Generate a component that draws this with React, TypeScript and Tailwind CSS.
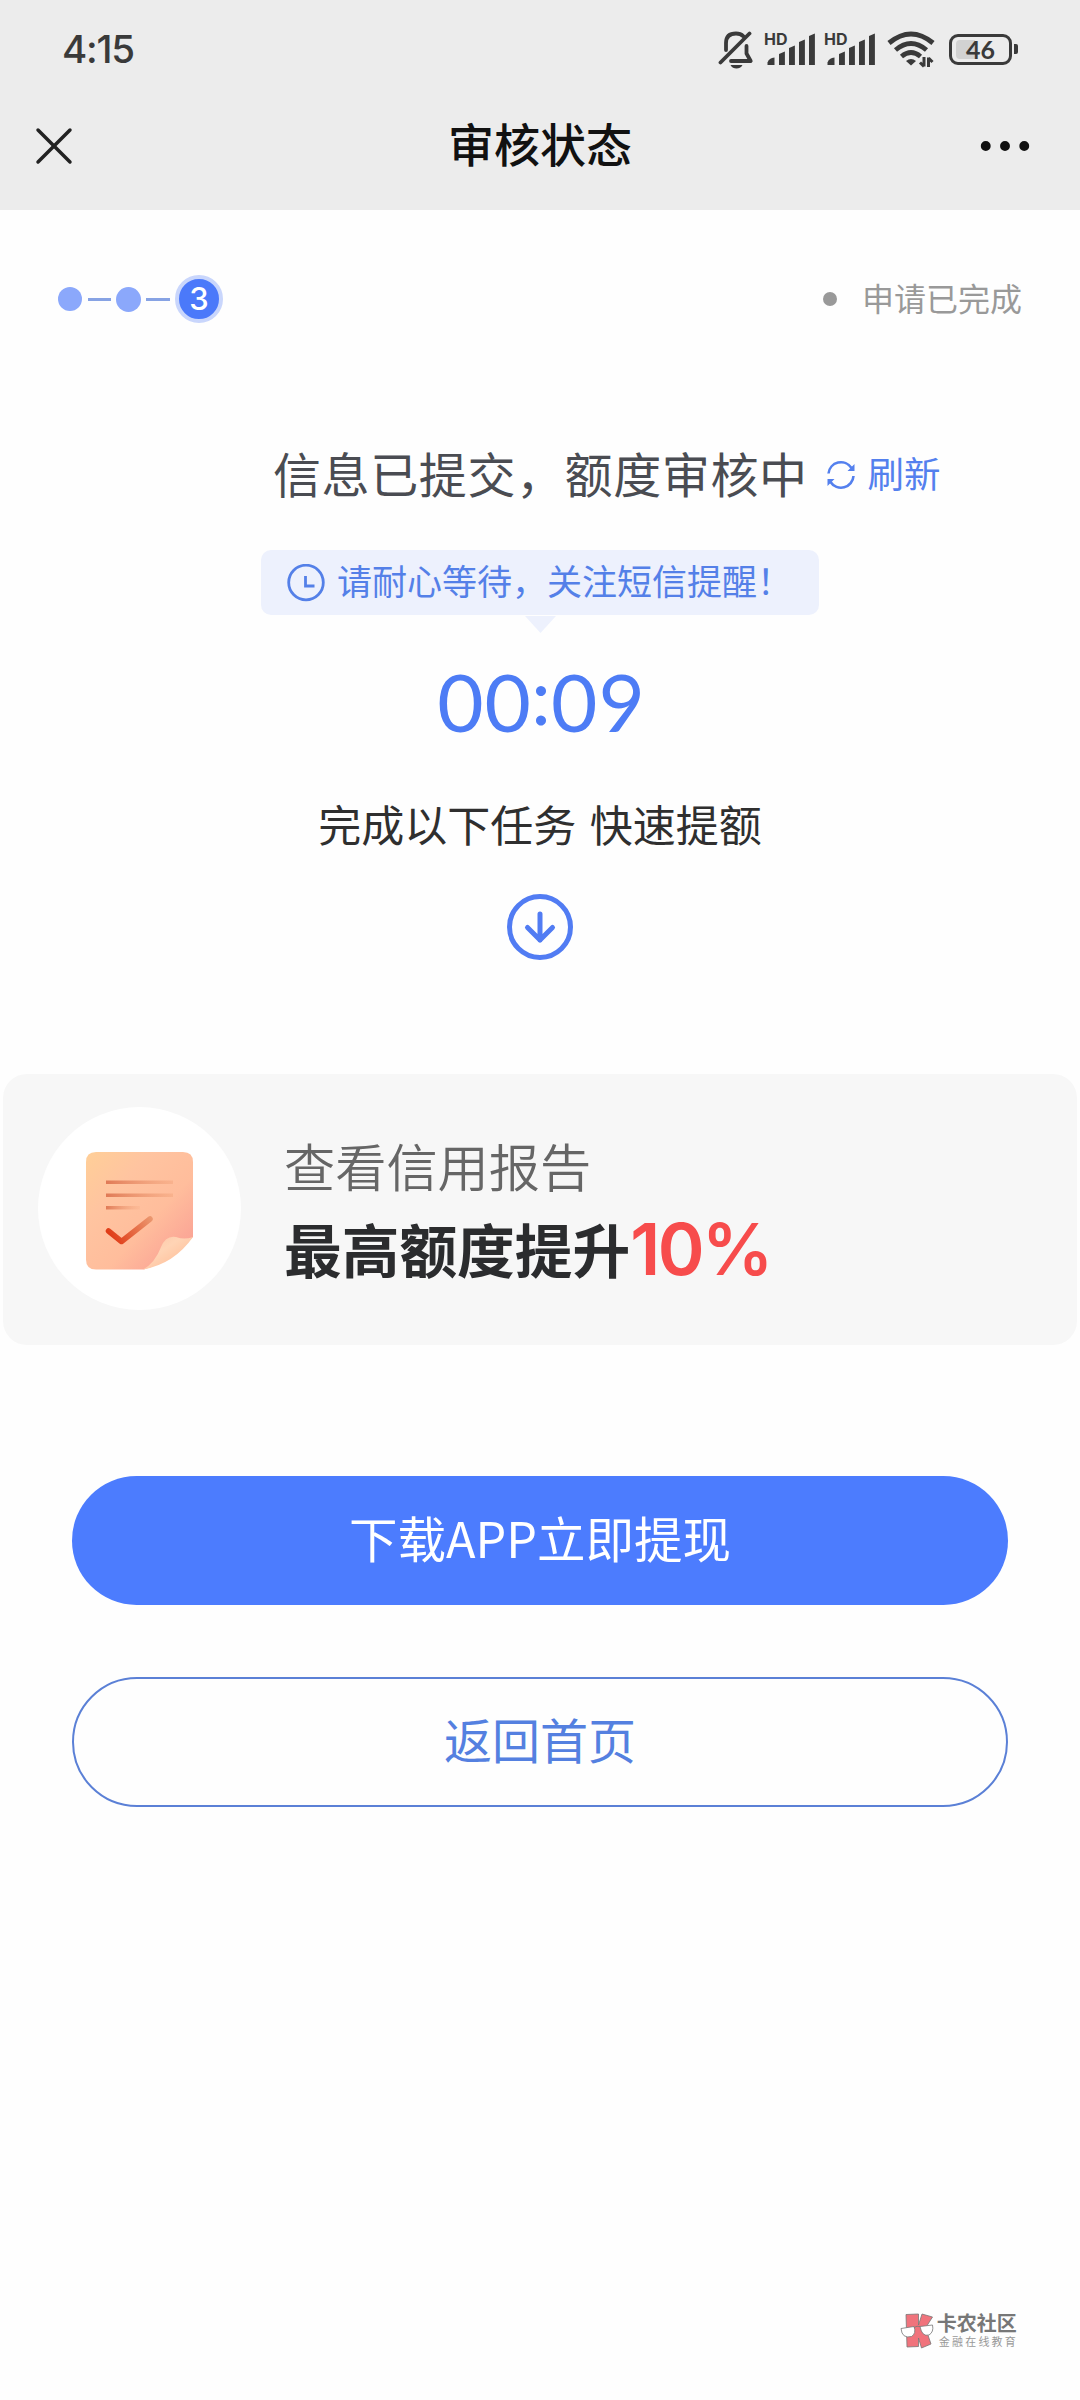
import { X, Ellipsis } from 'lucide-react'

const signalBars = [
  { x: 14, y: 19 },
  { x: 24, y: 13 },
  { x: 34, y: 7 },
  { x: 44, y: 1 },
]

function MutedBell() {
  return (
    <svg className="h-[40px] w-[36px]" viewBox="0 0 36 40" fill="none" stroke="#3a3a3a" strokeWidth="3.800" strokeLinecap="round">
      <path d="M8 21V14C8 7.500 12 4.500 18 4.500c3 0 5.500 1 7.500 2.800" />
      <path d="M2.500 33.500 31.500 4.500" />
      <path d="M28.500 17v7.500l4.200 7.500H13" strokeLinejoin="round" />
      <path d="M12.500 36H24.500c-1.500 2.700-3.500 3.500-6 3.500s-4.600-.8-6-3.500z" fill="#3a3a3a" stroke="none" />
    </svg>
  )
}

function Signal() {
  return (
    <div className="relative h-[34px] w-[52px]">
      <span className="absolute -top-[3px] -left-px font-[Inter] text-[16px] leading-[20px] font-bold text-[#3a3a3a]">HD</span>
      <svg className="h-[34px] w-[52px]" viewBox="0 0 52 34" fill="#3a3a3a">
        <path d="M2.500 33V30.500Q4 26 9.500 25.500V33z" />
        {signalBars.map((bar) => (
          <path key={bar.x} d={`M${bar.x} ${bar.y + 3}l5.900-2.500V33h-5.900z`} />
        ))}
      </svg>
    </div>
  )
}

function Wifi() {
  return (
    <svg className="h-[38px] w-[48px]" viewBox="0 0 48 38" fill="none" stroke="#3a3a3a">
      <path d="M2 13Q24-5 46 13" strokeWidth="5" />
      <path d="M8.500 20Q24 7 39.500 20" strokeWidth="4.800" />
      <path d="M14.500 26.500Q24 18.500 33.500 26.500" strokeWidth="4.800" />
      <path d="M19 31q5-4 10 0l-5 4.500z" fill="#3a3a3a" stroke="none" />
      <path d="M37 27v9.500M33 32.500l4 4M41.500 37V27.500M41.500 28l4 4" strokeWidth="3" />
    </svg>
  )
}

function Battery() {
  return (
    <div className="flex items-center gap-0.5">
      <div className="relative h-[31px] w-[63px] rounded-[9px] border-3 border-[#3a3a3a]">
        <div className="absolute top-[3px] left-[4px] h-[19px] w-[19px] rounded-l-[4px] bg-[#d2d2d2]" />
        <span className="absolute inset-0 flex items-center justify-center font-[Lato] text-[25px] leading-none font-bold text-[#3a3a3a]">46</span>
      </div>
      <div className="h-[10px] w-[4px] rounded-r-[2px] bg-[#3a3a3a]" />
    </div>
  )
}

function RefreshIcon() {
  return (
    <svg className="h-[30px] w-[30px]" viewBox="0 0 30 30" fill="none" stroke="#5480ee" strokeWidth="2.600">
      <path d="M2.500 13.500A12.500 12.500 0 0 1 25.500 8" />
      <path d="M27.500 16A12.500 12.500 0 0 1 4.500 22" />
      <path d="M28.500 4V11H21.500zM1.500 26V19H8.500z" fill="#5480ee" stroke="none" />
    </svg>
  )
}

function ReportIcon() {
  return (
    <svg className="h-[118px] w-[108px]" viewBox="0 0 108 118" fill="none">
      <defs>
        <linearGradient id="sheet" x1="0" y1="0" x2="1" y2="1">
          <stop offset="0" stopColor="#ffcf98" />
          <stop offset="0.3" stopColor="#ffc4a0" />
          <stop offset="0.6" stopColor="#ffbd9c" />
          <stop offset="0.85" stopColor="#fba696" />
          <stop offset="1" stopColor="#fdb498" />
        </linearGradient>
        <linearGradient id="fold" x1="0" y1="0" x2="1" y2="1">
          <stop offset="0" stopColor="#fcc3a4" />
          <stop offset="0.4" stopColor="#ffd4b5" />
          <stop offset="1" stopColor="#ffb58d" />
        </linearGradient>
        <linearGradient id="line" gradientUnits="userSpaceOnUse" x1="20" y1="0" x2="87" y2="0">
          <stop offset="0" stopColor="#e07a56" />
          <stop offset="1" stopColor="#f3a67e" stopOpacity="0.500" />
        </linearGradient>
        <linearGradient id="lineShort" gradientUnits="userSpaceOnUse" x1="20" y1="0" x2="54" y2="0">
          <stop offset="0" stopColor="#e07a56" />
          <stop offset="1" stopColor="#f3a67e" stopOpacity="0.200" />
        </linearGradient>
        <linearGradient id="check" gradientUnits="userSpaceOnUse" x1="28" y1="90" x2="66" y2="66">
          <stop offset="0" stopColor="#e03c17" />
          <stop offset="1" stopColor="#eb9870" />
        </linearGradient>
      </defs>
      <path d="M10 0H97Q107 0 107 10V85Q86 109 58 117.500H10Q0 117.500 0 107.500V10Q0 0 10 0z" fill="url(#sheet)" />
      <path d="M57 117.500Q69 111 75 95 80 83 90 85 98 88 107 85 88 112 57 117.500z" fill="url(#fold)" />
      <path d="M20 28.500h67v3.500h-67zM20 41.500h67V45h-67z" fill="url(#line)" />
      <path d="M20 54h34v3.500h-34z" fill="url(#lineShort)" />
      <path d="M22.500 79l13 10.500L64 67" stroke="url(#check)" strokeWidth="5.500" strokeLinejoin="round" strokeLinecap="round" />
    </svg>
  )
}

function CommunityLogo() {
  return (
    <svg className="h-[36px] w-[34px]" viewBox="0 0 34 36" stroke="#777" strokeWidth="0.800">
      <path d="M6 1.500 18.500 1v11L22 1l10.500 3-7 11 5.500 16-9.500 4L18.500 25v8.500L7 34z" fill="#f0737c" />
      <path d="M1 15.500 14 13.500q2.500 7-2.500 10Q2 26 1 15.500zM20 13.500 32.500 12q1.500 7-3.500 10-7 2-9-8.500z" fill="#fff" />
      <path d="M14 14.500q3-2 6-1" fill="none" />
    </svg>
  )
}

export default function App() {
  return (
    <div className="flex h-[2400px] w-[1080px] flex-col overflow-hidden bg-[#fefefe] font-['Noto_Sans_CJK_SC',sans-serif]">
      <header className="h-[210px] bg-[#ececec]">
        <div className="flex h-[98px] items-center justify-between px-[62px]">
          <span className="font-[Inter] text-[38.5px] leading-none font-medium tracking-[-1.2px] text-[#3a3a3a]">4:15</span>
          <div className="flex items-center">
            <MutedBell />
            <div className="w-[11px]" />
            <Signal />
            <div className="w-2" />
            <Signal />
            <div className="w-[10px]" />
            <Wifi />
            <div className="w-[14px]" />
            <Battery />
          </div>
        </div>
        <div className="grid h-[95px] grid-cols-3 items-center px-[22px]">
          <X className="h-[64px] w-[64px]" strokeWidth={1.3} color="#222" />
          <h1 className="pb-[7px] text-center text-[46px] leading-none font-medium whitespace-nowrap text-[#111]">审核状态</h1>
          <Ellipsis className="mr-[20px] ml-auto h-[66px] w-[66px]" strokeWidth={1.6} fill="#111" color="#111" />
        </div>
      </header>

      <div className="flex h-[178px] items-center justify-between px-[58px]">
        <div className="flex items-center">
          <span className="h-6 w-6 rounded-full bg-[#8ba8fb]" />
          <span className="mx-[5.5px] h-[3px] w-[23px] bg-[#87a3e4]" />
          <span className="h-[25px] w-[25px] rounded-full bg-[#8ba8fb]" />
          <span className="mx-[5px] h-[3px] w-6 bg-[#87a3e4]" />
          <span className="flex h-12 w-12 items-center justify-center rounded-full border-4 border-[#c9d6fc] bg-[#4b79fa] font-[Inter] text-[31px] font-medium text-white">3</span>
        </div>
        <div className="flex items-center text-[#999]">
          <span className="mr-[25px] h-[14px] w-[14px] rounded-full bg-[#999]" />
          <span className="pb-[5px] text-[32px] leading-none">申请已完成</span>
        </div>
      </div>

      <div className="mt-[57px] flex h-[60px] items-center pl-[273px]">
        <h2 className="pb-[6px] text-[48px] leading-none tracking-[0.6px] whitespace-nowrap text-[#4a4c52]">信息已提交，额度审核中</h2>
        <div className="ml-[18px] flex items-center gap-[12px] text-[#5480ee]">
          <RefreshIcon />
          <span className="pb-[4px] text-[36.5px] leading-none">刷新</span>
        </div>
      </div>

      <div className="mt-[45px] flex flex-col items-center">
        <div className="flex h-[65px] w-[558px] items-center rounded-[10px] bg-[#edf1fd] pl-[26px] text-[#5480e8]">
          <svg className="h-[38px] w-[38px]" viewBox="0 0 38 38" fill="none" stroke="currentColor" strokeWidth="2.800">
            <circle cx="19" cy="18.500" r="17.300" />
            <path d="M18.500 12v10h9" />
          </svg>
          <span className="ml-[12px] pb-[6px] text-[35px] leading-none whitespace-nowrap">请耐心等待，关注短信提醒！</span>
        </div>
        <svg className="mt-px h-[17px] w-[31px]" viewBox="0 0 31 17">
          <path d="M0 0h31L15.500 17z" fill="#edf1fd" />
        </svg>
        <div className="mt-[28px] flex h-[80px] items-center font-[Lato] text-[80px] leading-none tracking-[1px] text-[#4d7cf5]">
          <span>00</span>
          <span className="-mx-px pb-[15px]">:</span>
          <span className="-mr-[3px]">09</span>
        </div>
        <p className="mt-[61px] flex h-[43px] items-center text-[43px] leading-none [word-spacing:4px] whitespace-pre text-[#2f2f2f]">完成以下任务 快速提额</p>
        <svg className="mt-[49px] h-[66px] w-[66px]" viewBox="0 0 66 66" fill="none" stroke="#517cf3" strokeWidth="5" strokeLinecap="round" strokeLinejoin="round">
          <circle cx="33" cy="33" r="30.500" />
          <path d="M33 20v26M20.500 33.500 33 46l12.500-12.500" />
        </svg>
      </div>

      <div className="mx-[3px] mt-[114px] flex h-[271px] items-center rounded-[24px] bg-[#f7f7f7] pb-[3px] pl-[35px]">
        <div className="flex h-[203px] w-[203px] items-center justify-center rounded-full bg-white pt-[6px]">
          <ReportIcon />
        </div>
        <div className="ml-[43px] flex flex-col pt-[8px]">
          <span className="text-[51.2px] leading-[60px] font-[350] text-[#666]">查看信用报告</span>
          <div className="mt-[14px] flex h-[80px] items-center">
            <span className="text-[57.7px] leading-none font-bold text-[#2b2c2e]">最高额度提升</span>
            <span className="font-[Inter] text-[71px] leading-none font-semibold tracking-[-2.5px] text-[#f74c4c]">10%</span>
          </div>
        </div>
      </div>

      <div className="mt-[131px] flex flex-col gap-[72px] px-[72px]">
        <button className="h-[129px] rounded-full bg-[#4c7cfe] pb-[6px] text-[48.5px] leading-none text-white">下载APP立即提现</button>
        <button className="h-[130px] rounded-full border-2 border-[#5b80d6] pb-[8px] text-[48px] leading-none text-[#5480e0]">返回首页</button>
      </div>

      <div className="mt-auto mr-[62px] mb-[51px] flex items-center justify-end gap-[3px]">
        <CommunityLogo />
        <div className="-mt-[3px] flex flex-col">
          <span className="text-[20px] leading-[20px] font-bold text-[#777]">卡农社区</span>
          <span className="mt-[2px] pl-[2px] text-[11px] leading-[12px] tracking-[2.2px] text-[#999]">金融在线教育</span>
        </div>
      </div>
    </div>
  )
}
